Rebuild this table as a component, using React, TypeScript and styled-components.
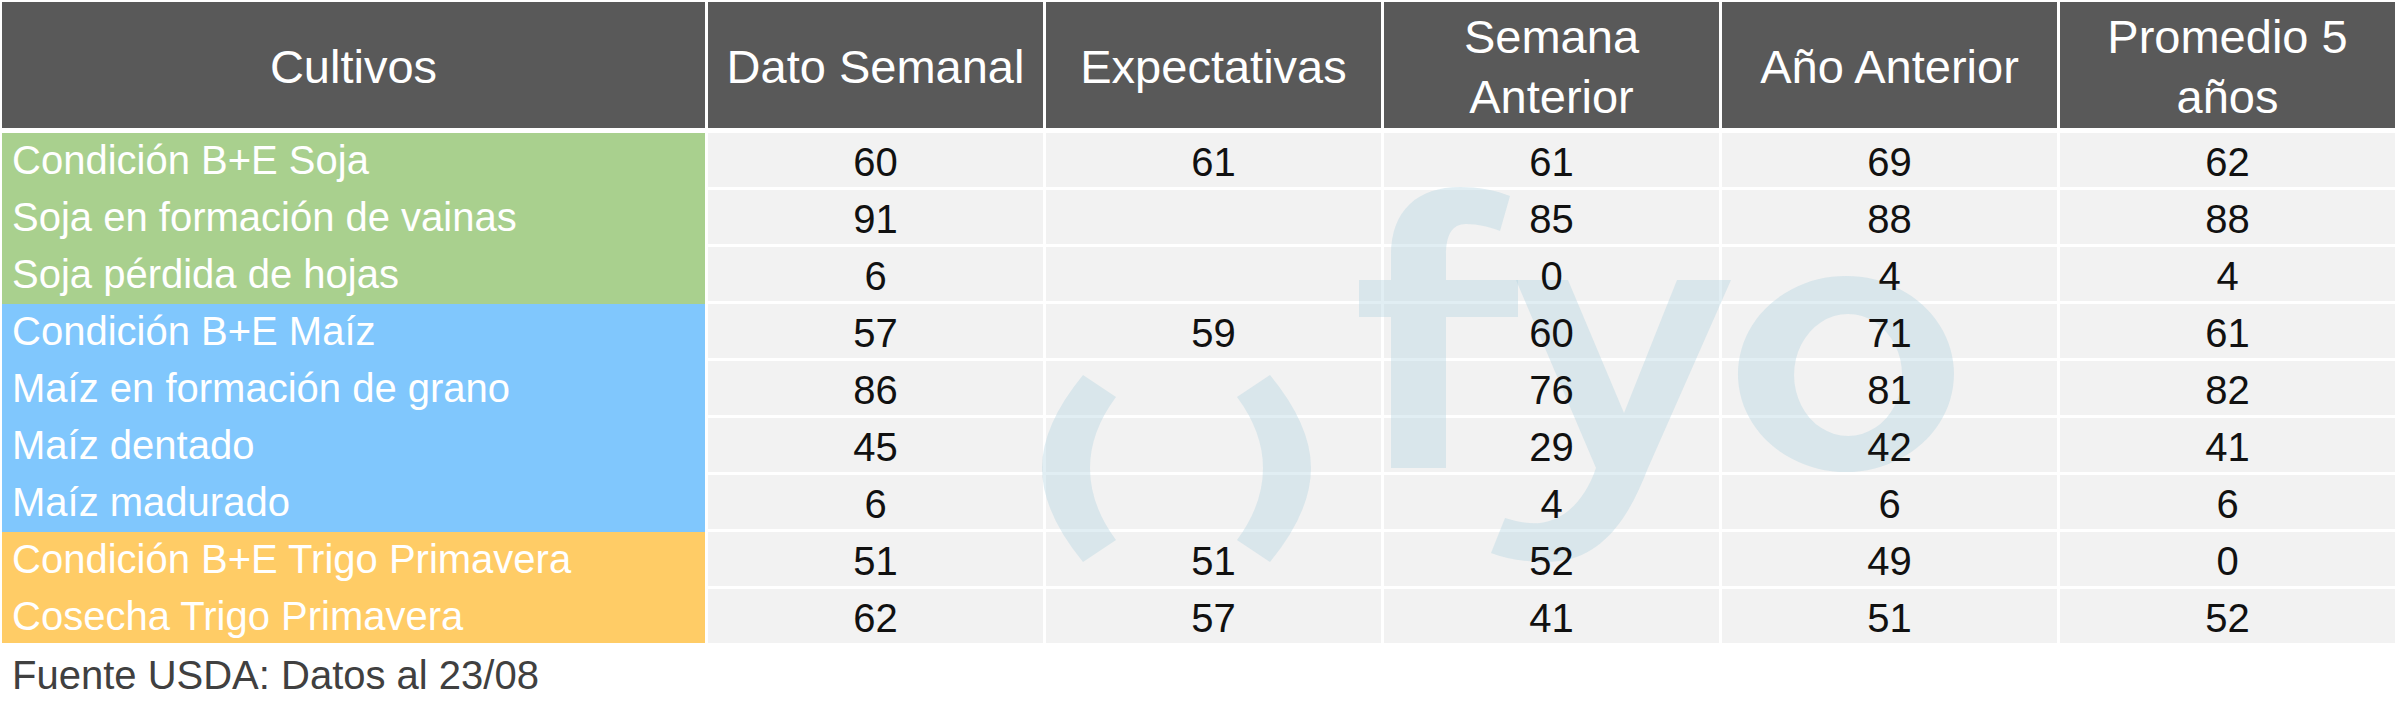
import React from 'react';
import styled, { createGlobalStyle } from 'styled-components';

const GlobalStyle = createGlobalStyle`
  html, body {
    margin: 0;
    padding: 0;
    background: #ffffff;
  }
  body {
    font-family: "Liberation Sans", Arial, sans-serif;
  }
`;

type Group = 'soja' | 'maiz' | 'trigo';

const groupColors: Record<Group, string> = {
  soja: '#a9d08e',
  maiz: '#80c7fd',
  trigo: '#ffcc66',
};

interface Row {
  label: string;
  group: Group;
  values: string[];
}

const rows: Row[] = [
  { label: 'Condición B+E Soja', group: 'soja', values: ['60', '61', '61', '69', '62'] },
  { label: 'Soja en formación de vainas', group: 'soja', values: ['91', '', '85', '88', '88'] },
  { label: 'Soja pérdida de hojas', group: 'soja', values: ['6', '', '0', '4', '4'] },
  { label: 'Condición B+E Maíz', group: 'maiz', values: ['57', '59', '60', '71', '61'] },
  { label: 'Maíz en formación de grano', group: 'maiz', values: ['86', '', '76', '81', '82'] },
  { label: 'Maíz dentado', group: 'maiz', values: ['45', '', '29', '42', '41'] },
  { label: 'Maíz madurado', group: 'maiz', values: ['6', '', '4', '6', '6'] },
  { label: 'Condición B+E Trigo Primavera', group: 'trigo', values: ['51', '51', '52', '49', '0'] },
  { label: 'Cosecha Trigo Primavera', group: 'trigo', values: ['62', '57', '41', '51', '52'] },
];

const headers: React.ReactNode[] = [
  'Cultivos',
  'Dato Semanal',
  'Expectativas',
  <>Semana<br />Anterior</>,
  'Año Anterior',
  <>Promedio 5<br />años</>,
];

const Page = styled.div`
  position: relative;
  width: 2400px;
  height: 707px;
  padding: 2px 0 0 2px;
  box-sizing: border-box;
  overflow: hidden;
`;

const Grid = styled.div`
  display: grid;
  grid-template-columns: 703px repeat(5, 335px);
  grid-template-rows: 128px;
  grid-auto-rows: 54px;
  column-gap: 3px;
  row-gap: 3px;
`;

const HeaderCell = styled.div`
  align-self: start;
  height: 126px;
  background: #595959;
  color: #ffffff;
  font-size: 47px;
  line-height: 60px;
  display: flex;
  align-items: center;
  justify-content: center;
  text-align: center;
  padding-top: 3px;
  box-sizing: border-box;
`;

const LabelCell = styled.div<{ $color: string; $extend: boolean }>`
  background: ${(p) => p.$color};
  margin-bottom: ${(p) => (p.$extend ? '-3px' : '0')};
  color: #ffffff;
  font-size: 40px;
  line-height: 54px;
  padding-left: 10px;
  white-space: nowrap;
`;

const ValueCell = styled.div`
  background: #f2f2f2;
  color: #111111;
  font-size: 40px;
  line-height: 54px;
  padding-top: 2px;
  box-sizing: border-box;
  text-align: center;
`;

const CellText = styled.span`
  position: relative;
  z-index: 2;
`;

const Footer = styled.div`
  margin-top: 9px;
  padding-left: 10px;
  color: #404040;
  font-size: 40px;
  line-height: 46px;
`;

const Watermark = styled.svg`
  position: absolute;
  left: 0;
  top: 0;
  width: 2400px;
  height: 707px;
  z-index: 1;
  pointer-events: none;
`;

const markFill = 'rgba(175, 211, 224, 0.38)';

const FyoMark: React.FC = () => (
  <Watermark viewBox="0 0 2400 707">
    {/* ( */}
    <path
      fill={markFill}
      d="M1083 375 Q1042 425 1042 468 Q1042 512 1083 562 L1116 540 Q1090 505 1090 468 Q1090 432 1116 397 Z"
    />
    {/* ) */}
    <path
      fill={markFill}
      d="M1270 375 Q1311 425 1311 468 Q1311 512 1270 562 L1237 540 Q1263 505 1263 468 Q1263 432 1237 397 Z"
    />
    {/* f */}
    <path
      fill={markFill}
      d="M1391 468 L1391 317 L1359 317 L1359 280 L1391 280 L1391 255 C1391 210 1418 187 1460 187 C1478 187 1495 190 1510 196 L1500 231 C1490 227 1478 224 1466 224 C1452 224 1446 235 1446 255 L1446 280 L1518 280 L1518 317 L1446 317 L1446 468 Z"
    />
    {/* y */}
    <path
      fill={markFill}
      d="M1516 280 L1568 280 L1624 413 L1677 280 L1731 280 L1648 468 C1630 515 1605 555 1560 561 C1535 564 1510 560 1491 553 L1505 518 C1518 522 1530 524 1540 523 C1565 520 1585 500 1596 468 Z"
    />
    {/* o */}
    <path
      fill={markFill}
      fillRule="evenodd"
      d="M1846 276 A108 98 0 1 1 1845.9 276 Z M1848 314 A54 61 0 1 0 1848.1 314 Z"
    />
  </Watermark>
);

const App: React.FC = () => {
  return (
    <>
      <GlobalStyle />
      <Page>
        <Grid>
          {headers.map((h, i) => (
            <HeaderCell key={`h${i}`}>{h}</HeaderCell>
          ))}
          {rows.map((row, r) => (
            <React.Fragment key={row.label}>
              <LabelCell $color={groupColors[row.group]} $extend={r < rows.length - 1}>
                <CellText>{row.label}</CellText>
              </LabelCell>
              {row.values.map((v, c) => (
                <ValueCell key={c}>
                  <CellText>{v}</CellText>
                </ValueCell>
              ))}
            </React.Fragment>
          ))}
        </Grid>
        <Footer>Fuente USDA: Datos al 23/08</Footer>
        <FyoMark />
      </Page>
    </>
  );
};

export default App;
